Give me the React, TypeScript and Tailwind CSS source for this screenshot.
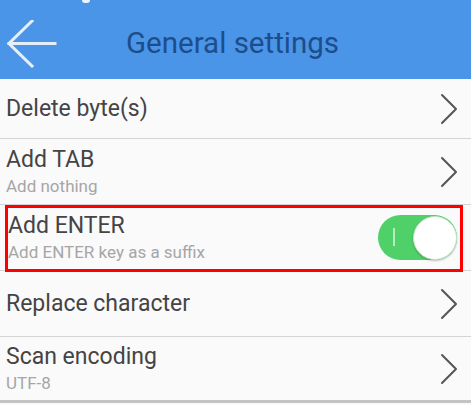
import { useState } from "react";

type Row = {
  title: string;
  sub?: string;
  kind: "link" | "toggle";
};

const rows: Row[] = [
  { title: "Delete byte(s)", kind: "link" },
  { title: "Add TAB", sub: "Add nothing", kind: "link" },
  { title: "Add ENTER", sub: "Add ENTER key as a suffix", kind: "toggle" },
  { title: "Replace character", kind: "link" },
  { title: "Scan encoding", sub: "UTF-8", kind: "link" },
];

function Chevron() {
  return (
    <svg width="18" height="32" viewBox="0 0 18 32" className="shrink-0">
      <path d="M2 2 L16 16 L2 30" fill="none" stroke="#555" strokeWidth="2" strokeLinecap="round" strokeLinejoin="round" />
    </svg>
  );
}

function Toggle({ on, onClick }: { on: boolean; onClick: () => void }) {
  return (
    <button
      onClick={onClick}
      className={`relative h-[45px] w-[79px] shrink-0 rounded-full ${on ? "bg-[#4fd068]" : "bg-[#d8d8d8]"}`}
    >
      <span className="absolute left-[15px] top-[13px] h-[18px] w-[2px] bg-[#b4efbf]" />
      <span
        className={`absolute top-[1px] h-[44px] w-[44px] rounded-full border border-[#bfe8c6] bg-white shadow-[0_1px_2px_rgba(0,0,0,0.25)] ${on ? "right-0" : "left-0"}`}
      />
    </button>
  );
}

export default function App() {
  const [enter, setEnter] = useState(true);

  return (
    <div className="h-[405px] w-[471px] overflow-hidden bg-[#fafafa]" style={{ fontFamily: "Roboto, 'Noto Sans', sans-serif" }}>
      <div className="relative flex h-[79px] items-center bg-[#4a95e8] pt-[9px]">
        <span className="absolute left-[82px] top-[-3px] h-[6px] w-[8px] rounded-full bg-white/90" />
        <svg width="50" height="48" viewBox="0 0 50 48" className="ml-[7px] shrink-0">
          <path d="M48 23.5 H2 M25 1 L2 23.5 L25 46" fill="none" stroke="#e6eef8" strokeWidth="3" strokeLinecap="square" strokeLinejoin="miter" />
        </svg>
        <h1 className="ml-[69px] text-[29.5px] leading-none text-[#1d4d8a]">General settings</h1>
      </div>

      {rows.map((row, i) => {
        const last = i === rows.length - 1;
        return (
          <div
            key={row.title}
            className={`relative flex items-center justify-between ${i === 0 ? "h-[60px]" : "h-[66px]"} ${last ? "border-b-[3px] border-[#c4c4c4]" : "border-b border-[#d4d4d4]"} ${row.kind === "toggle" ? "pl-[8px] pr-[14px]" : "pl-[6px] pr-[13px]"}`}
          >
            <div className="flex flex-col">
              <span className="text-[23px] leading-[28px] text-[#444444]">{row.title}</span>
              {row.sub && <span className="mt-[1px] text-[17px] leading-[22px] text-[#a6a6a6]">{row.sub}</span>}
            </div>
            {row.kind === "link" ? <Chevron /> : <Toggle on={enter} onClick={() => setEnter(!enter)} />}
            {row.kind === "toggle" && (
              <div className="pointer-events-none absolute left-[5px] top-0 h-[67px] w-[458px] border-[3px] border-[#ff0000]" />
            )}
          </div>
        );
      })}
    </div>
  );
}
